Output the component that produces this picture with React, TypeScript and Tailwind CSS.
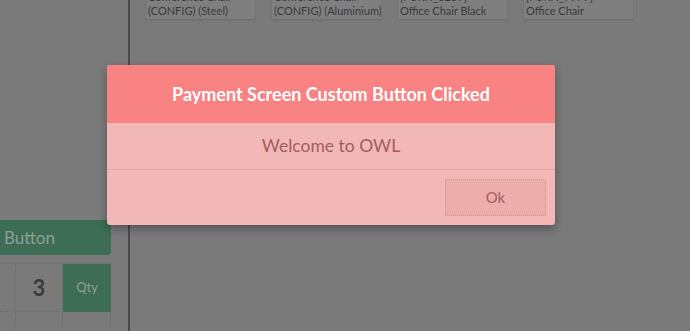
import { ReactNode } from 'react';

const products = [
  { top: 'Conference Chair', bottom: '(CONFIG) (Steel)' },
  { top: 'Conference Chair', bottom: '(CONFIG) (Aluminium)' },
  { top: '[FURN_0269]', bottom: 'Office Chair Black' },
  { top: '[FURN_7777]', bottom: 'Office Chair' },
];

function Cell({ children, className = '' }: { children?: ReactNode; className?: string }) {
  return (
    <div className={`flex items-center justify-center border-r border-b border-dotted border-[#6b6b6b] ${className}`}>
      {children}
    </div>
  );
}

export default function App() {
  return (
    <div className="relative w-[690px] h-[331px] overflow-hidden bg-[#7a7a7a] font-['Lato','Open_Sans',sans-serif]">
      <div className="flex h-full">
        {/* left pane */}
        <div className="w-[130px] shrink-0 h-full flex flex-col border-r-2 border-[#4a4a4a] pt-[212px]">
          <div className="w-[111px] h-px bg-[#3f6a52] mb-[8px]" />
          <div className="w-[111px] h-[35px] shrink-0 bg-[#3d6d54] rounded-br-[3px] flex items-center pl-[4px] text-[17px] text-[#8f9f95]">
            Button
          </div>
          <div className="w-[111px] mt-[8px] shrink-0 grid grid-cols-[16px_47px_48px] border-t border-dotted border-[#6b6b6b] text-[#3a3a3a]">
            <Cell className="h-[48px]" />
            <Cell className="h-[48px] text-[22px] font-bold">3</Cell>
            <div className="h-[48px] bg-[#3d6d54] flex items-center justify-center text-[13px] text-[#8fa096]">Qty</div>
            <Cell className="h-[48px]" />
            <Cell className="h-[48px]" />
            <Cell className="h-[48px]" />
          </div>
        </div>

        {/* right pane */}
        <div className="flex-1 pl-[16px]">
          <div className="flex gap-[17px] -mt-[21px]">
            {products.map((p, i) => (
              <div
                key={i}
                className="w-[109px] shrink-0 h-[40px] flex flex-col justify-end pb-[1px] bg-[#7f7f7f] shadow-[0_1px_2px_rgba(0,0,0,0.15)] px-[2px] text-[11px] leading-[14px] text-[#3a3a3a] whitespace-nowrap overflow-hidden"
              >
                <div>{p.top}</div>
                <div>{p.bottom}</div>
              </div>
            ))}
          </div>
        </div>
      </div>

      {/* modal */}
      <div className="absolute left-[107px] top-[65px] w-[448px] h-[160px] bg-[#f2b8b8] rounded-[3px] shadow-[0_4px_10px_rgba(0,0,0,0.3)] flex flex-col overflow-hidden">
        <div className="h-[58px] bg-[#f98383] flex items-center justify-center text-white font-bold text-[18px]">
          Payment Screen Custom Button Clicked
        </div>
        <div className="h-[47px] flex items-center justify-center text-[17.5px] text-[#a65b5e] border-b border-[#e7a9a9]">
          Welcome to OWL
        </div>
        <div className="flex-1 flex justify-end items-start pt-[9px] pr-[9px]">
          <div className="w-[101px] h-[37px] bg-[#eeadad] border border-dotted border-[#d39696] flex items-center justify-center text-[15px] text-[#a65b5e]">
            Ok
          </div>
        </div>
      </div>
    </div>
  );
}
